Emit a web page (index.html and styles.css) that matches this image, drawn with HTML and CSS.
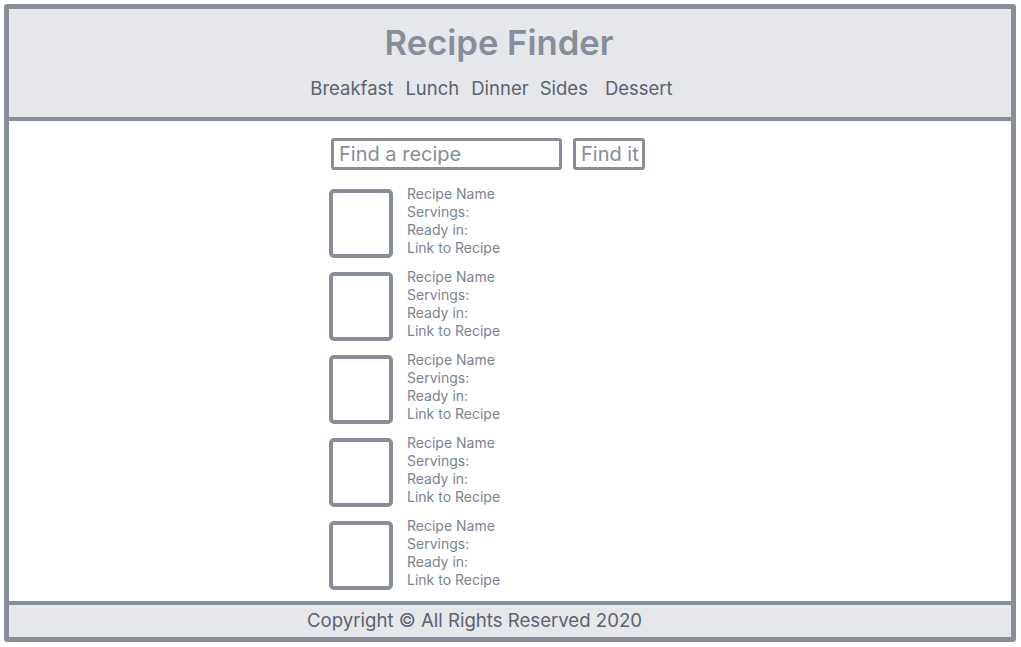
FILE: index.html
```html
<!DOCTYPE html>
<html lang="en">
<head>
<meta charset="utf-8">
<title>Recipe Finder</title>
<link rel="stylesheet" href="styles.css">
</head>
<body>
<div class="frame">
  <header class="header">
    <h1 class="title">Recipe Finder</h1>
    <nav class="nav">
      <a class="nav-link">Breakfast</a>
      <a class="nav-link">Lunch</a>
      <a class="nav-link">Dinner</a>
      <a class="nav-link nav-link--sides">Sides</a>
      <a class="nav-link nav-link--last">Dessert</a>
    </nav>
  </header>
  <main class="main">
    <div class="search">
      <div class="search-input">Find a recipe</div>
      <div class="search-btn">Find it</div>
    </div>
    <ul class="list">
      <li class="item"><div class="thumb"></div><div class="info"><div>Recipe Name</div><div>Servings:</div><div>Ready in:</div><div>Link to Recipe</div></div></li>
      <li class="item"><div class="thumb"></div><div class="info"><div>Recipe Name</div><div>Servings:</div><div>Ready in:</div><div>Link to Recipe</div></div></li>
      <li class="item"><div class="thumb"></div><div class="info"><div>Recipe Name</div><div>Servings:</div><div>Ready in:</div><div>Link to Recipe</div></div></li>
      <li class="item"><div class="thumb"></div><div class="info"><div>Recipe Name</div><div>Servings:</div><div>Ready in:</div><div>Link to Recipe</div></div></li>
      <li class="item"><div class="thumb"></div><div class="info"><div>Recipe Name</div><div>Servings:</div><div>Ready in:</div><div>Link to Recipe</div></div></li>
    </ul>
  </main>
  <footer class="footer">Copyright © All Rights Reserved 2020</footer>
</div>
</body>
</html>
```
FILE: styles.css
```css
* { box-sizing: border-box; }
html, body { margin: 0; padding: 0; background: #ffffff; }
body {
  font-family: Inter, "Noto Sans", "Liberation Sans", sans-serif;
  width: 1021px;
  height: 647px;
  overflow: hidden;
}
.frame {
  margin: 4px 0 0 4px;
  width: 1012px;
  height: 638px;
  border: 5px solid #878d99;
  border-radius: 3px;
  display: flex;
  flex-direction: column;
}
.header {
  flex-shrink: 0;
  height: 112px;
  background: #e6e7eb;
  border-bottom: 4px solid #878d99;
  display: flex;
  flex-direction: column;
  align-items: center;
}
.title {
  margin: 0 0 0 -22px;
  padding-top: 13px;
  font-size: 34.6px;
  line-height: 40px;
  font-weight: 600;
  color: #878d99;
}
.nav {
  display: flex;
  gap: 12px;
  margin-top: 15px;
  margin-left: -37px;
  font-size: 18.5px;
  line-height: 22px;
  color: #5c6270;
}
.nav-link--sides { margin-left: -1px; }
.nav-link--last { margin-left: 5px; }
.main {
  flex: 1;
  min-height: 0;
  overflow: hidden;
  background: #ffffff;
  padding: 17px 0 0 322px;
}
.search {
  display: flex;
  gap: 11px;
  height: 32px;
}
.search-input,
.search-btn {
  border: 3px solid #878d99;
  border-radius: 3px;
  font-size: 20px;
  line-height: 26px;
  color: #878d99;
}
.search-input {
  width: 231px;
  padding-left: 5px;
}
.search-btn {
  width: 72px;
  padding-left: 5px;
}
.list {
  list-style: none;
  margin: 19px 0 0 -2px;
  padding: 0;
}
.item {
  display: flex;
  gap: 14px;
  height: 69px;
  margin-bottom: 14px;
}
.thumb {
  flex-shrink: 0;
  width: 64px;
  height: 69px;
  border: 4px solid #878d99;
  border-radius: 5px;
}
.info {
  margin-top: -4px;
  font-size: 14px;
  line-height: 18px;
  color: #7c8292;
}
.footer {
  flex-shrink: 0;
  height: 36px;
  border-top: 4px solid #878d99;
  background: #e6e7eb;
  padding-left: 298px;
  font-size: 18.6px;
  line-height: 30px;
  color: #5c6270;
}
```
